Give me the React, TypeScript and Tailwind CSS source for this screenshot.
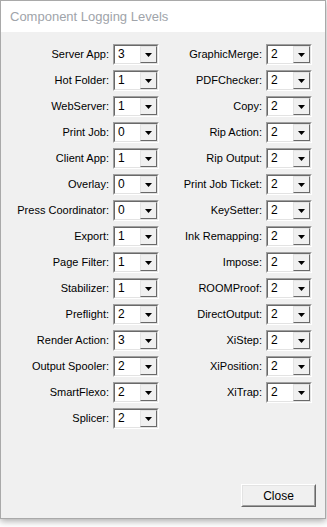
import React from "react";

const left: [string, string][] = [
  ["Server App:", "3"],
  ["Hot Folder:", "1"],
  ["WebServer:", "1"],
  ["Print Job:", "0"],
  ["Client App:", "1"],
  ["Overlay:", "0"],
  ["Press Coordinator:", "0"],
  ["Export:", "1"],
  ["Page Filter:", "1"],
  ["Stabilizer:", "1"],
  ["Preflight:", "2"],
  ["Render Action:", "3"],
  ["Output Spooler:", "2"],
  ["SmartFlexo:", "2"],
  ["Splicer:", "2"],
];

const right: [string, string][] = [
  ["GraphicMerge:", "2"],
  ["PDFChecker:", "2"],
  ["Copy:", "2"],
  ["Rip Action:", "2"],
  ["Rip Output:", "2"],
  ["Print Job Ticket:", "2"],
  ["KeySetter:", "2"],
  ["Ink Remapping:", "2"],
  ["Impose:", "2"],
  ["ROOMProof:", "2"],
  ["DirectOutput:", "2"],
  ["XiStep:", "2"],
  ["XiPosition:", "2"],
  ["XiTrap:", "2"],
];

function Combo({ value }: { value: string }) {
  return (
    <div className="w-[46px] h-[21px] border border-t-[#a0a0a0] border-l-[#a0a0a0] border-r-white border-b-white">
      <div className="w-full h-full border border-t-[#696969] border-l-[#696969] border-r-[#e3e3e3] border-b-[#e3e3e3] bg-white flex">
        <div className="flex-1 pl-[3px] text-[12px] leading-[17px] text-black">{value}</div>
        <div className="w-[17px] h-full border border-t-[#e3e3e3] border-l-[#e3e3e3] border-r-[#696969] border-b-[#696969] bg-[#f0f0f0] flex items-center justify-center">
          <svg width="7" height="4" viewBox="0 0 7 4">
            <path d="M0 0H7L3.5 4Z" fill="#000" />
          </svg>
        </div>
      </div>
    </div>
  );
}

function Row({ label, value }: { label: string; value: string }) {
  return (
    <div className="h-[21px] flex items-center justify-end gap-[4px]">
      <span className="text-[11px] text-black whitespace-nowrap">{label}</span>
      <Combo value={value} />
    </div>
  );
}

export default function App() {
  return (
    <div
      className="w-[327px] h-[527px] bg-white"
      style={{ fontFamily: '"Liberation Sans", Arial, sans-serif' }}
    >
      <div className="w-[326px] h-[519px] border border-[#a9a9a9] flex flex-col shadow-[0_2px_7px_rgba(0,0,0,0.35)]">
        <div className="h-[31px] bg-white flex items-center pl-[9px]">
          <span className="text-[13px] text-[#a0a4aa]">Component Logging Levels</span>
        </div>
        <div className="flex-1 bg-[#f0f0f0] flex flex-col pt-[12px]">
          <div className="flex">
            <div className="w-[158px] flex flex-col gap-[5px]">
              {left.map(([l, v]) => (
                <Row key={l} label={l} value={v} />
              ))}
            </div>
            <div className="flex-1 pr-[13px] flex flex-col gap-[5px]">
              {right.map(([l, v]) => (
                <Row key={l} label={l} value={v} />
              ))}
            </div>
          </div>
          <div className="flex-1" />
          <div className="flex justify-end pr-[9px] pb-[11px]">
            <div className="w-[75px] h-[23px] border border-t-white border-l-white border-r-[#696969] border-b-[#696969]">
              <div className="w-full h-full border border-t-[#e3e3e3] border-l-[#e3e3e3] border-r-[#a0a0a0] border-b-[#a0a0a0] bg-[#f0f0f0] flex items-center justify-center text-[12px] text-black">
                Close
              </div>
            </div>
          </div>
        </div>
      </div>
    </div>
  );
}
